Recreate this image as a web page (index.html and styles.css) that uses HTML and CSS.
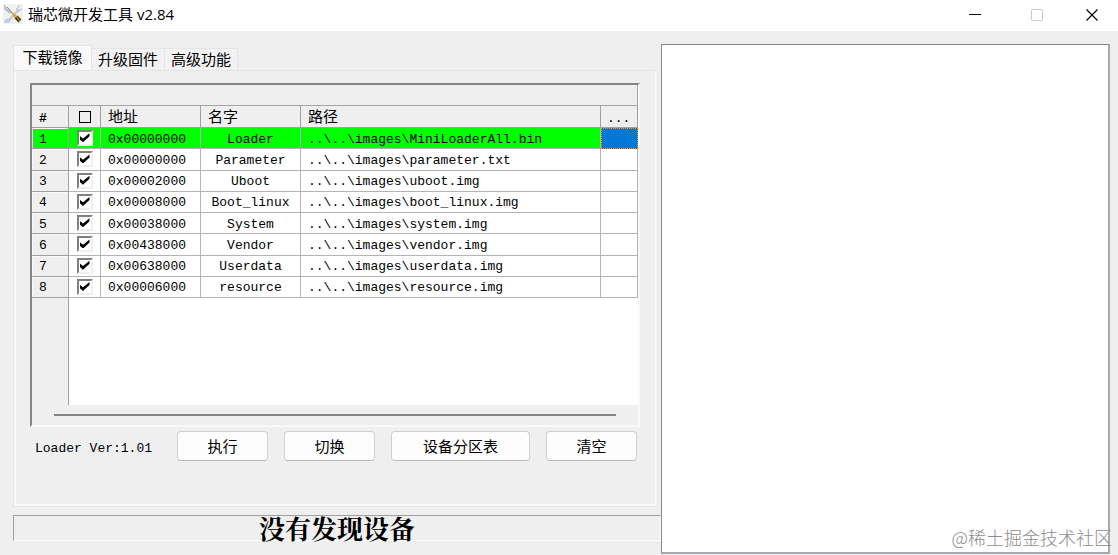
FILE: index.html
```html
<!DOCTYPE html>
<html lang="zh-CN">
<head>
    <meta charset="UTF-8">
    <meta name="viewport" content="width=device-width, initial-scale=1.0">
    <title>瑞芯微开发工具 v2.84</title>
    <link rel="stylesheet" href="styles.css">
</head>
<body>

<header class="titlebar">
    <svg class="app-icon" viewBox="0 0 20 20" aria-hidden="true">
        <rect width="20" height="20" fill="#f1f1f1"/>
        <path d="M18 1l-3 1-2 3v2L6 14l-3 1-2 2 1 2h4l2-3 7-8 3-1 1-3-3 2-1-2z" fill="#c3ccd8"/>
        <path d="M1 1l2 1 1 3 3 1 2 3-2 1-4-3-2-2z" fill="#b9c3cf"/>
        <path d="M4 3l8 9" stroke="#8f7f60" stroke-width="1"/>
        <path d="M10 10l3 3" stroke="#e0a81e" stroke-width="3"/>
        <path d="M13 13l4 4" stroke="#4a3d1c" stroke-width="4"/>
        <path d="M13 12l4 5" stroke="#d9a420" stroke-width="1"/>
    </svg>
    <h1>瑞芯微开发工具 v2.84</h1>
    <div class="window-buttons">
        <button type="button" aria-label="最小化"><svg viewBox="0 0 12 12"><path d="M0 5.5h12" stroke="#000"/></svg></button>
        <button type="button" aria-label="最大化" disabled><svg viewBox="0 0 12 12"><rect x=".5" y=".5" width="11" height="11" rx="1" fill="none" stroke="#c8c8c8"/></svg></button>
        <button type="button" aria-label="关闭"><svg viewBox="0 0 12 12"><path d="M.5.5l11 11M11.5.5l-11 11" stroke="#000" stroke-width="1.2"/></svg></button>
    </div>
</header>

<main class="content">
    <section class="left">
        <div class="tabs" role="tablist">
            <button type="button" class="tab active" role="tab" aria-selected="true">下载镜像</button>
            <button type="button" class="tab" role="tab" aria-selected="false">升级固件</button>
            <button type="button" class="tab" role="tab" aria-selected="false">高级功能</button>
        </div>

        <div class="tab-page">
            <div class="grid">
                <div class="grid-title"></div>
                <table>
                    <colgroup>
                        <col class="col-num"><col class="col-check"><col class="col-text"><col class="col-text"><col><col class="col-num">
                    </colgroup>
                    <thead>
                        <tr>
                            <th>#</th>
                            <th class="check"><input type="checkbox" class="flat" aria-label="全选"></th>
                            <th>地址</th>
                            <th>名字</th>
                            <th>路径</th>
                            <th class="more">...</th>
                        </tr>
                    </thead>
                    <tbody>
                        <tr class="selected">
                            <th>1</th>
                            <td class="check"><input type="checkbox" aria-label="Loader" checked></td>
                            <td>0x00000000</td>
                            <td class="name">Loader</td>
                            <td>..\..\images\MiniLoaderAll.bin</td>
                            <td class="focus"></td>
                        </tr>
                        <tr>
                            <th>2</th>
                            <td class="check"><input type="checkbox" aria-label="Parameter" checked></td>
                            <td>0x00000000</td>
                            <td class="name">Parameter</td>
                            <td>..\..\images\parameter.txt</td>
                            <td></td>
                        </tr>
                        <tr>
                            <th>3</th>
                            <td class="check"><input type="checkbox" aria-label="Uboot" checked></td>
                            <td>0x00002000</td>
                            <td class="name">Uboot</td>
                            <td>..\..\images\uboot.img</td>
                            <td></td>
                        </tr>
                        <tr>
                            <th>4</th>
                            <td class="check"><input type="checkbox" aria-label="Boot_linux" checked></td>
                            <td>0x00008000</td>
                            <td class="name">Boot_linux</td>
                            <td>..\..\images\boot_linux.img</td>
                            <td></td>
                        </tr>
                        <tr>
                            <th>5</th>
                            <td class="check"><input type="checkbox" aria-label="System" checked></td>
                            <td>0x00038000</td>
                            <td class="name">System</td>
                            <td>..\..\images\system.img</td>
                            <td></td>
                        </tr>
                        <tr>
                            <th>6</th>
                            <td class="check"><input type="checkbox" aria-label="Vendor" checked></td>
                            <td>0x00438000</td>
                            <td class="name">Vendor</td>
                            <td>..\..\images\vendor.img</td>
                            <td></td>
                        </tr>
                        <tr>
                            <th>7</th>
                            <td class="check"><input type="checkbox" aria-label="Userdata" checked></td>
                            <td>0x00638000</td>
                            <td class="name">Userdata</td>
                            <td>..\..\images\userdata.img</td>
                            <td></td>
                        </tr>
                        <tr>
                            <th>8</th>
                            <td class="check"><input type="checkbox" aria-label="resource" checked></td>
                            <td>0x00006000</td>
                            <td class="name">resource</td>
                            <td>..\..\images\resource.img</td>
                            <td></td>
                        </tr>
                    </tbody>
                </table>
                <div class="grid-empty"></div>
                <div class="scrollbar"><div class="thumb"></div></div>
            </div>

            <div class="actions">
                <span class="loader-ver">Loader Ver:1.01</span>
                <button type="button">执行</button>
                <button type="button">切换</button>
                <button type="button" class="wide">设备分区表</button>
                <button type="button">清空</button>
            </div>
        </div>

        <div class="status">没有发现设备</div>
    </section>

    <section class="log" aria-label="日志">
        <span class="watermark">@稀土掘金技术社区</span>
    </section>
</main>

</body>
</html>
```

FILE: styles.css
```css
* {
    box-sizing: border-box;
}
body {
    margin: 0;
    min-height: 100vh;
    display: flex;
    flex-direction: column;
    background: #efefef;
    color: #000;
    font-family: "Liberation Sans", "Noto Sans CJK SC", sans-serif;
    font-size: 15px;
}
button {
    font: inherit;
    color: inherit;
    padding: 0;
}

/* title bar */
.titlebar {
    display: flex;
    align-items: center;
    height: 31px;
    padding-left: 3px;
    background: #fff;
}
.app-icon {
    width: 20px;
    height: 20px;
    margin: 0 5px 3px 0;
}
.titlebar h1 {
    flex: 1;
    margin: 0;
    padding-bottom: 3px;
    font-family: "Open Sans", "Noto Sans CJK SC", sans-serif;
    font-size: 15px;
    font-weight: normal;
    line-height: 28px;
}
.window-buttons {
    display: flex;
}
.window-buttons button {
    display: flex;
    align-items: center;
    justify-content: center;
    width: 58px;
    height: 30px;
    margin-bottom: 2px;
    border: none;
    background: none;
}
.window-buttons button:first-child {
    margin-right: 4px;
}
.window-buttons button:last-child {
    width: 52px;
}
.window-buttons svg {
    width: 12px;
    height: 12px;
}

/* layout */
.content {
    flex: 1;
    display: grid;
    grid-template-columns: minmax(0, 648fr) minmax(0, 449fr);
    padding: 13px 8px 1px 13px;
}
.left {
    display: flex;
    flex-direction: column;
    padding-bottom: 13px;
}

/* tabs */
.tabs {
    display: flex;
    align-items: flex-end;
    height: 26px;
}
.tab {
    width: 73px;
    height: 22px;
    border: 1px solid #e5e5e5;
    border-bottom: none;
    border-left: none;
    background: #f2f2f2;
    line-height: 21px;
}
.tab.active {
    width: 79px;
    height: 25px;
    padding-bottom: 2px;
    border-left: 1px solid #e5e5e5;
    background: #f9f9f9;
}
.tab-page {
    flex: 1;
    display: flex;
    flex-direction: column;
    margin-right: 3px;
    padding: 12px 15px 43px 14px;
    border: 3px solid #f8f8f8;
    border-top-width: 1px;
    outline: 1px solid #e5e5e5;
    outline-offset: -1px;
}

/* partition grid */
.grid {
    flex: 1;
    display: flex;
    flex-direction: column;
    border: 2px solid #858585;
    border-right-color: #f9f9f9;
    border-bottom-color: #f9f9f9;
}
.grid-title {
    height: 21px;
    border-right: 1px solid #a5a5a5;
    border-bottom: 1px solid #a5a5a5;
}
table {
    width: 100%;
    height: 192px;
    table-layout: fixed;
    border-collapse: separate;
    border-spacing: 0;
    font-family: "Liberation Mono", "Noto Sans CJK SC", monospace;
    font-size: 13px;
    line-height: 16px;
}
.col-num {
    width: 37px;
}
.col-check {
    width: 32px;
}
.col-text {
    width: 100px;
}
th,
td {
    height: 21px;
    padding: 3px 0 0 7px;
    text-align: left;
    font-weight: normal;
    white-space: nowrap;
    border-right: 1px solid #b4b4b4;
    border-bottom: 1px solid #b4b4b4;
}
td {
    background: #fff;
}
th {
    border-color: #a0a0a0;
    background: #efefef;
}
thead th {
    height: 22px;
    padding-top: 4px;
    font-size: 15px;
}
thead th:first-child {
    font-size: 13px;
    font-weight: bold;
}
thead .more {
    padding-left: 6px;
    font-size: 13px;
}
tbody th {
    box-shadow: inset 1px 1px #f9f9f9;
}
.name {
    padding-left: 0;
    text-align: center;
}
.selected th,
.selected td {
    background: #00ff00;
}
.selected .focus {
    background: #0078d7;
    border: 1px dotted #f09040;
}
th.check,
td.check {
    padding: 0;
}
input[type="checkbox"] {
    appearance: none;
    display: block;
    width: 16px;
    height: 16px;
    margin: 0 auto;
    background: #fff;
    border: 2px solid #808080;
    border-right-color: #f0f0f0;
    border-bottom-color: #f0f0f0;
}
input[type="checkbox"]:checked::before {
    content: "";
    display: block;
    width: 10px;
    height: 9px;
    margin: 1px;
    background: #000;
    clip-path: polygon(0 30%, 35% 60%, 100% 0, 100% 35%, 35% 100%, 0 68%);
}
input[type="checkbox"].flat {
    width: 12px;
    height: 12px;
    background: none;
    border: 1px solid #000;
}
.grid-empty {
    flex: 1;
    margin-left: 36px;
    border-left: 1px solid #a0a0a0;
    background: #fff;
}
.scrollbar {
    height: 20px;
    padding: 9px 22px 0;
}
.thumb {
    height: 2px;
    background: #858585;
}

/* buttons below the grid */
.actions {
    display: flex;
    align-items: center;
    gap: 16px;
    margin-top: 4px;
    padding: 0 3px 0 5px;
}
.actions button {
    width: 91px;
    height: 30px;
    padding-bottom: 2px;
    border: 1px solid #d0d0d0;
    border-bottom-color: #bbb;
    border-radius: 4px;
    background: #fdfdfd;
}
.actions .wide {
    width: 139px;
}
.loader-ver {
    flex: 1;
    padding-top: 4px;
    font-family: "Liberation Mono", monospace;
    font-size: 13px;
}

/* device status */
.status {
    height: 26px;
    margin-top: 8px;
    border: 1px solid #a0a0a0;
    border-right-color: #fff;
    border-bottom-color: #fff;
    font-family: "Noto Serif CJK SC", "Noto Sans CJK SC", serif;
    font-size: 26px;
    font-weight: bold;
    line-height: 24px;
    text-align: center;
}

/* log panel */
.log {
    position: relative;
    border: 1px solid #828790;
    border-width: 1px 2px 2px 1px;
    border-right-color: #a5a9b0;
    border-bottom-color: #a5a9b0;
    background: #fff;
}
.watermark {
    position: absolute;
    right: -4px;
    bottom: 2px;
    color: #8c8c8c;
    font-family: "Noto Sans CJK SC", sans-serif;
    font-size: 18px;
    font-weight: 300;
    line-height: 26px;
}
```
